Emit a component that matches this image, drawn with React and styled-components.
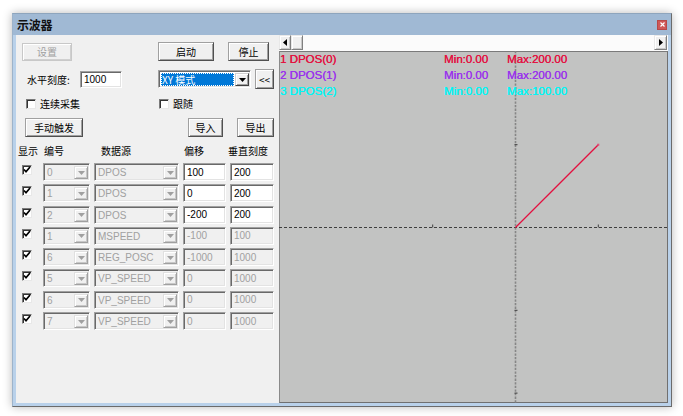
import React from 'react';
import styled, { createGlobalStyle, css } from 'styled-components';

const Global = createGlobalStyle`
  html, body { margin: 0; padding: 0; background: #ffffff; }
  body {
    font-family: "Liberation Sans", "Noto Sans CJK SC", sans-serif;
    font-size: 10px;
    color: #000;
  }
  * { box-sizing: border-box; }
`;

const Page = styled.div`
  width: 683px;
  height: 416px;
  padding: 13px 0 0 12px;
`;

const Window = styled.div`
  width: 660px;
  height: 394px;
  display: flex;
  flex-direction: column;
  background: #f0f0f0;
  border: 1px solid #6b6b6b;
  border-top-color: #8ea5bd;
  border-left-color: #9db3ca;
  box-shadow: 0 0 9px rgba(0, 0, 0, 0.28);
`;

const TitleBar = styled.div`
  height: 21px;
  flex: none;
  background: #a0b9d4;
  display: flex;
  align-items: center;
  justify-content: space-between;
  padding: 0 4px 0 4px;
`;

const Title = styled.span`
  font-family: "Noto Sans CJK SC", sans-serif;
  font-size: 12px;
  font-weight: 700;
  color: #111;
  letter-spacing: -0.3px;
`;

const CloseBtn = styled.div`
  width: 10px;
  height: 10px;
  background: #cf5858;
  border: 1px solid #b84848;
  display: flex;
  align-items: center;
  justify-content: center;
`;

const Body = styled.div`
  flex: 1;
  display: flex;
  border: 3px solid #b9d1ea;
  border-top: none;
`;

const LeftPanel = styled.div`
  width: 263px;
  flex: none;
  display: flex;
  flex-direction: column;
  padding-top: 7px;
`;

const CtrlRow = styled.div`
  display: flex;
  align-items: center;
  height: ${(p) => p.$h}px;
  margin-top: ${(p) => p.$mt || 0}px;
`;

const raised = css`
  border: 1px solid #a0a0a0;
  border-right-color: #505050;
  border-bottom-color: #505050;
  box-shadow: inset 1px 1px #ffffff, inset -1px -1px #a0a0a0;
  background: #f0f0f0;
`;

const sunken = css`
  border: 1px solid #a0a0a0;
  border-right-color: #ffffff;
  border-bottom-color: #ffffff;
  box-shadow: inset 1px 1px #696969, inset -1px -1px #e3e3e3;
`;

const Button = styled.div`
  ${raised};
  width: ${(p) => p.$w}px;
  height: ${(p) => p.$h || 19}px;
  margin-left: ${(p) => p.$ml || 0}px;
  display: flex;
  align-items: center;
  justify-content: center;
  font-family: "Noto Sans CJK SC", sans-serif;
  font-size: 10px;
  color: ${(p) => (p.$disabled ? '#a0a0a0' : '#000')};
  ${(p) =>
    p.$disabled &&
    css`
      border-color: #c8c8c8;
      box-shadow: inset 1px 1px #ffffff, inset -1px -1px #d0d0d0;
    `}
`;

const Label = styled.span`
  font-family: "Noto Sans CJK SC", sans-serif;
  font-size: 10px;
  width: ${(p) => p.$w}px;
  margin-left: ${(p) => p.$ml || 0}px;
  flex: none;
`;

const TextField = styled.div`
  ${sunken};
  width: ${(p) => p.$w}px;
  height: ${(p) => p.$h || 18}px;
  margin-left: ${(p) => p.$ml || 0}px;
  background: ${(p) => (p.$disabled ? '#f0f0f0' : '#ffffff')};
  color: ${(p) => (p.$disabled ? '#a0a0a0' : '#000')};
  display: flex;
  align-items: center;
  padding-left: 3px;
  font-size: 10px;
  flex: none;
`;

const SelectBox = styled.div`
  ${sunken};
  width: ${(p) => p.$w}px;
  height: ${(p) => p.$h}px;
  margin-left: ${(p) => p.$ml || 0}px;
  background: ${(p) => (p.$active ? '#ffffff' : '#f0f0f0')};
  display: flex;
  align-items: stretch;
  padding: 2px 1px 1px 2px;
  flex: none;
`;

const SelectValue = styled.div`
  flex: 1;
  display: flex;
  align-items: center;
  padding-left: 1px;
  font-size: 10px;
  overflow: hidden;
  white-space: nowrap;
  color: #a0a0a0;
  ${(p) =>
    p.$selected &&
    css`
      background: #0078d7;
      color: #ffffff;
      outline: 1px dotted #ffffff;
      outline-offset: -1px;
      margin-right: 1px;
      font-family: "Noto Sans CJK SC", sans-serif;
    `}
`;

const ArrowBtn = styled.div`
  ${raised};
  width: 14px;
  flex: none;
  display: flex;
  align-items: center;
  justify-content: center;
  box-shadow: inset 1px 1px #ffffff, inset -1px -1px #c8c8c8;
  border-color: #e0e0e0 #a0a0a0 #a0a0a0 #e0e0e0;
  ${(p) =>
    p.$active &&
    css`
      border-color: #d0d0d0 #404040 #404040 #d0d0d0;
      box-shadow: inset 1px 1px #ffffff, inset -1px -1px #a0a0a0;
    `}
`;

const CheckBox = styled.span`
  width: 10px;
  height: 10px;
  flex: none;
  background: #ffffff;
  border: 1px solid #7a7a7a;
  border-right-color: #e8e8e8;
  border-bottom-color: #e8e8e8;
  box-shadow: inset 1px 1px #333;
  display: inline-flex;
  align-items: center;
  justify-content: center;
  margin-left: ${(p) => p.$ml || 0}px;
  margin-top: ${(p) => p.$mt || 0}px;
`;

const CheckItem = styled.div`
  display: flex;
  align-items: center;
  gap: 4px;
  width: ${(p) => p.$w || 'auto'};
  margin-left: ${(p) => p.$ml || 0}px;
  flex: none;
  font-family: "Noto Sans CJK SC", sans-serif;
  font-size: 10px;
`;

const cols = css`
  display: grid;
  grid-template-columns: 18px 47px 85px 43px 44px;
  column-gap: 4px;
  margin-left: 5px;
`;

const HeaderRow = styled.div`
  ${cols};
  height: 13px;
  margin-top: 6px;
  align-items: center;
`;

const HeadCell = styled.span`
  font-family: "Noto Sans CJK SC", sans-serif;
  font-size: 10px;
  margin-left: ${(p) => p.$ml || 0}px;
  white-space: nowrap;
`;

const Table = styled.div`
  ${cols};
  grid-auto-rows: 18px;
  row-gap: 3.3px;
  margin-top: 7px;
`;

const CheckCell = styled.div`
  display: flex;
  align-items: flex-start;
`;

const ScopePanel = styled.div`
  flex: 1;
  display: flex;
  flex-direction: column;
`;

const ScrollBar = styled.div`
  height: 16px;
  flex: none;
  display: flex;
  background-color: #fbfbfb;
  background-image: radial-gradient(#e6e6e6 0.6px, transparent 0.7px);
  background-size: 2px 2px;
  padding-bottom: 1px;
`;

const ScrollBtn = styled.div`
  ${raised};
  width: ${(p) => p.$w}px;
  margin-left: ${(p) => (p.$right ? 'auto' : '0')};
  margin-right: ${(p) => (p.$right ? '1px' : '0')};
  display: flex;
  align-items: center;
  justify-content: center;
  border-color: #e8e8e8 #808080 #808080 #e8e8e8;
  box-shadow: inset 1px 1px #ffffff, inset -1px -1px #c8c8c8;
`;

const Plot = styled.div`
  flex: 1;
  position: relative;
  background: #c2c3c2;
  border: 1px solid #707070;
  border-top-color: #7a7a7a;
  border-left-color: #8a8a8a;
`;

const PlotSvg = styled.svg`
  position: absolute;
  left: -1px;
  top: -1px;
`;

const Legend = styled.div`
  position: relative;
  display: grid;
  grid-template-columns: 164px 63px 1fr;
  grid-auto-rows: 16px;
  align-items: center;
  margin-top: -1px;
  font-family: "Liberation Sans", sans-serif;
  font-size: 11.5px;
`;

const LegendCell = styled.span`
  color: ${(p) => p.$c};
  white-space: nowrap;
  text-shadow: 0.3px 0 0 ${(p) => p.$c};
`;

const Check = () => (
  <svg width="8" height="8" viewBox="0 0 8 8">
    <path d="M1 3.5 L3 5.8 L7 1" fill="none" stroke="#000" strokeWidth="1.7" />
  </svg>
);

const DownTri = ({ c = '#000' }) => (
  <svg width="7" height="4" viewBox="0 0 7 4">
    <path d="M0 0 H7 L3.5 4 Z" fill={c} />
  </svg>
);

const SideTri = ({ left }) => (
  <svg width="4" height="7" viewBox="0 0 4 7">
    <path d={left ? 'M4 0 V7 L0 3.5 Z' : 'M0 0 V7 L4 3.5 Z'} fill="#000" />
  </svg>
);

const rows = [
  ['0', 'DPOS', '100', '200', true],
  ['1', 'DPOS', '0', '200', true],
  ['2', 'DPOS', '-200', '200', true],
  ['1', 'MSPEED', '-100', '100', false],
  ['6', 'REG_POSC', '-1000', '1000', false],
  ['5', 'VP_SPEED', '0', '1000', false],
  ['6', 'VP_SPEED', '0', '1000', false],
  ['7', 'VP_SPEED', '0', '1000', false],
];

const legend = [
  ['1 DPOS(0)', 'Min:0.00', 'Max:200.00', '#e3103f'],
  ['2 DPOS(1)', 'Min:0.00', 'Max:200.00', '#9a32ec'],
  ['3 DPOS(2)', 'Min:0.00', 'Max:100.00', '#00f6f6'],
];

const W = 389;
const H = 352;
const OX = 236.5;
const OY = 176.5;
const STEP = 82.8;

const ScopeDrawing = () => {
  const hTicks = [-1, 1];
  const vTicks = [-1, 1, 2];
  return (
    <PlotSvg width={W} height={H} viewBox={`0 0 ${W} ${H}`}>
      <line x1={OX} y1={0} x2={OX} y2={H} stroke="#868686" strokeWidth="1.6" strokeDasharray="2.3 1.3" />
      <line x1={0} y1={OY} x2={W} y2={OY} stroke="#3e3e3e" strokeWidth="1" strokeDasharray="3 2" />
      {hTicks.map((k) => (
        <line key={'h' + k} x1={OX + k * STEP} y1={OY - 3} x2={OX + k * STEP} y2={OY} stroke="#3e3e3e" strokeWidth="1" />
      ))}
      {vTicks.map((k) => (
        <line key={'v' + k} x1={OX - 1} y1={OY + k * STEP} x2={OX + 2} y2={OY + k * STEP} stroke="#3e3e3e" strokeWidth="1" />
      ))}
      <line x1={OX} y1={OY} x2={OX + STEP} y2={OY - STEP} stroke="#e3103f" strokeWidth="1.3" />
      <rect x={OX + STEP - 1} y={OY - STEP - 1} width="2" height="2" fill="#e0507a" />
    </PlotSvg>
  );
};

export default function App() {
  return (
    <Page>
      <Global />
      <Window>
        <TitleBar>
          <Title>示波器</Title>
          <CloseBtn>
            <svg width="5" height="5" viewBox="0 0 5 5">
              <path d="M0.5 0.5 L4.5 4.5 M4.5 0.5 L0.5 4.5" stroke="#fff" strokeWidth="1.2" />
            </svg>
          </CloseBtn>
        </TitleBar>
        <Body>
          <LeftPanel>
            <CtrlRow $h={19}>
              <Button $w={50} $h={18} $ml={6} $disabled>设置</Button>
              <Button $w={56} $ml={86}>启动</Button>
              <Button $w={41} $ml={14}>停止</Button>
            </CtrlRow>
            <CtrlRow $h={20} $mt={8}>
              <Label $w={53} $ml={11}>水平刻度:</Label>
              <TextField $w={42} $h={17}>1000</TextField>
              <SelectBox $w={93} $h={18} $ml={36} $active>
                <SelectValue $selected>XY 模式</SelectValue>
                <ArrowBtn $active>
                  <DownTri />
                </ArrowBtn>
              </SelectBox>
              <Button $w={19} $h={20} $ml={4}>&lt;&lt;</Button>
            </CtrlRow>
            <CtrlRow $h={11} $mt={9}>
              <CheckItem $w="133px" $ml={10}>
                <CheckBox />
                连续采集
              </CheckItem>
              <CheckItem>
                <CheckBox />
                跟随
              </CheckItem>
            </CtrlRow>
            <CtrlRow $h={19} $mt={9}>
              <Button $w={58} $ml={9}>手动触发</Button>
              <Button $w={35} $ml={105}>导入</Button>
              <Button $w={37} $ml={14}>导出</Button>
            </CtrlRow>
            <HeaderRow>
              <HeadCell $ml={-3}>显示</HeadCell>
              <HeadCell $ml={1}>编号</HeadCell>
              <HeadCell $ml={7}>数据源</HeadCell>
              <HeadCell $ml={1}>偏移</HeadCell>
              <HeadCell $ml={-2}>垂直刻度</HeadCell>
            </HeaderRow>
            <Table>
              {rows.map(([num, src, off, scale, en], i) => (
                <React.Fragment key={i}>
                  <CheckCell>
                    <CheckBox $ml={1} $mt={2}>
                      <Check />
                    </CheckBox>
                  </CheckCell>
                  <SelectBox $w={47} $h={18}>
                    <SelectValue>{num}</SelectValue>
                    <ArrowBtn>
                      <DownTri c="#a0a0a0" />
                    </ArrowBtn>
                  </SelectBox>
                  <SelectBox $w={85} $h={18}>
                    <SelectValue>{src}</SelectValue>
                    <ArrowBtn>
                      <DownTri c="#a0a0a0" />
                    </ArrowBtn>
                  </SelectBox>
                  <TextField $w={43} $disabled={!en}>{off}</TextField>
                  <TextField $w={44} $disabled={!en}>{scale}</TextField>
                </React.Fragment>
              ))}
            </Table>
          </LeftPanel>
          <ScopePanel>
            <ScrollBar>
              <ScrollBtn $w={12}>
                <SideTri left />
              </ScrollBtn>
              <ScrollBtn $w={12} />
              <ScrollBtn $w={13} $right>
                <SideTri />
              </ScrollBtn>
            </ScrollBar>
            <Plot>
              <ScopeDrawing />
              <Legend>
                {legend.map(([n, mn, mx, c]) => (
                  <React.Fragment key={n}>
                    <LegendCell $c={c}>{n}</LegendCell>
                    <LegendCell $c={c}>{mn}</LegendCell>
                    <LegendCell $c={c}>{mx}</LegendCell>
                  </React.Fragment>
                ))}
              </Legend>
            </Plot>
          </ScopePanel>
        </Body>
      </Window>
    </Page>
  );
}
